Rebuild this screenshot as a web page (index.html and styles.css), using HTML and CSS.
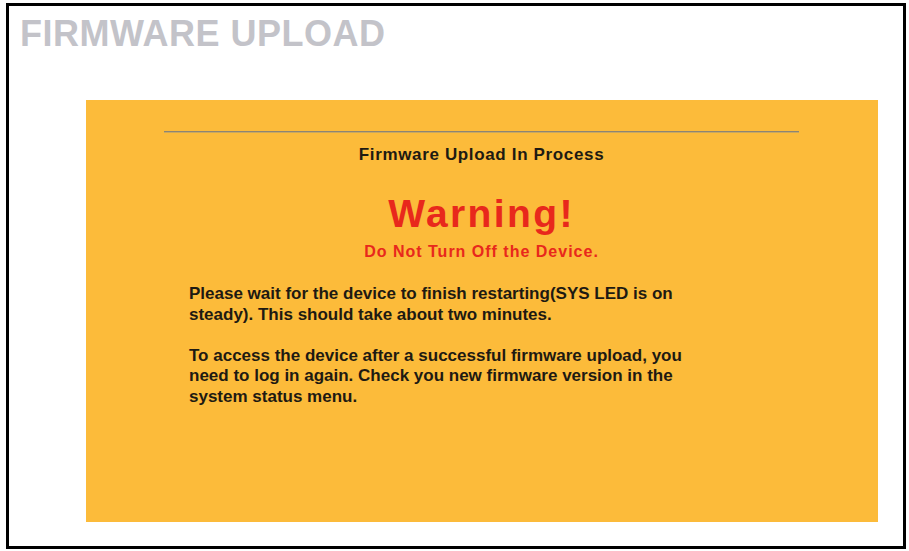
FILE: index.html
```html
<!DOCTYPE html>
<html lang="en">

<head>
    <meta charset="UTF-8">
    <title>Firmware Upload</title>
    <link rel="stylesheet" href="styles.css">
</head>

<body>
    <div class="frame">
        <h1 class="page_title">FIRMWARE UPLOAD</h1>

        <div class="panel">
            <div class="panel_inner">
                <hr class="rule">
                <div class="status">Firmware Upload In Process</div>
                <div class="warning">Warning!</div>
                <div class="warning_sub">Do Not Turn Off the Device.</div>

                <div class="info">
                    <p>Please wait for the device to finish restarting(SYS LED is on steady). This should take about two minutes.</p>
                    <p>To access the device after a successful firmware upload, you need to log in again. Check you new firmware version in the system status menu.</p>
                </div>
            </div>
        </div>
    </div>
</body>

</html>
```

FILE: styles.css
```css
body {
    margin: 0;
    background-color: #fff;
    font-family: "Liberation Sans", Arial, sans-serif;
}

.frame {
    margin: 3px 0 0 6px;
    width: 894px;
    height: 540px;
    border: 3px solid #000;
}

.page_title {
    margin: 10px 0 0 11px;
    font-size: 36px;
    line-height: 36px;
    letter-spacing: 0.5px;
    font-weight: bold;
    color: #c3c3c9;
}

.panel {
    margin: 48px 0 0 77px;
    width: 792px;
    height: 391px;
    padding-top: 31px;
    background-color: #fcbb3a;
}

.panel_inner {
    margin-left: 78px;
    width: 635px;
    text-align: center;
}

.rule {
    margin: 0;
    height: 1px;
    border: none;
    border-top: 1px solid #8c8474;
    background-color: #c9a860;
}

.status {
    margin-top: 12px;
    font-size: 17px;
    line-height: 20px;
    letter-spacing: 0.65px;
    font-weight: bold;
    color: #1e1a12;
}

.warning {
    margin-top: 29px;
    font-size: 39px;
    line-height: 40px;
    letter-spacing: 2.4px;
    font-weight: bold;
    color: #e8281c;
}

.warning_sub {
    margin-top: 9px;
    font-size: 16px;
    line-height: 18px;
    letter-spacing: 1px;
    font-weight: bold;
    color: #e8281c;
}

.info {
    margin-top: 23px;
    padding-left: 25px;
    width: 510px;
    text-align: left;
    font-size: 17px;
    line-height: 20.5px;
    font-weight: bold;
    color: #1e1a12;
}

.info p {
    margin: 0 0 20.5px 0;
}
```
